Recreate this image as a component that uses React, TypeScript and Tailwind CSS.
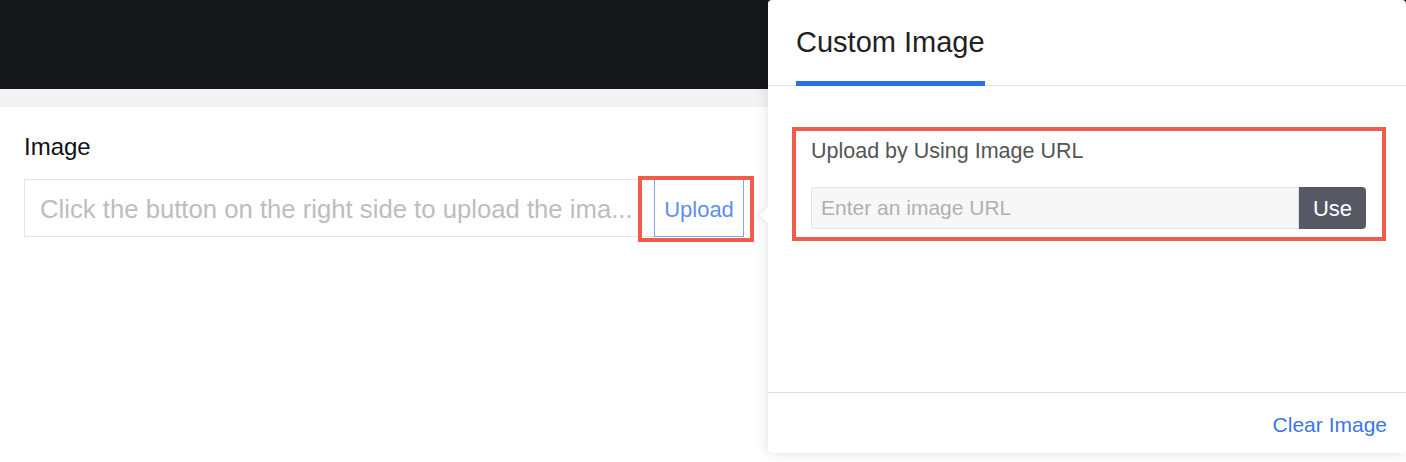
import React from "react";

export default function App() {
  return (
    <div
      className="relative w-[1406px] h-[462px] overflow-hidden bg-white"
      style={{ fontFamily: '"Liberation Sans", Arial, sans-serif' }}
    >
      {/* Left page */}
      <div className="h-[89px] bg-[#16171b]" />
      <div className="h-[18px] bg-[#f3f3f4]" />
      <div className="pl-[24px] pt-[26px]">
        <div className="text-[24px] leading-[28px] text-[#111]">Image</div>
        <div className="mt-[18px] flex w-[720px] h-[58px]">
          <div className="flex-1 flex items-center pt-[2px] border border-[#e4e4e4] border-r-0 pl-[15px] text-[25.7px] text-[#bdbdbd] whitespace-nowrap overflow-hidden">
            Click the button on the right side to upload the ima...
          </div>
          <div className="w-[90px] flex items-center justify-center pt-[2px] border border-[#86a4e2] text-[22px] text-[#5f8fe6]">
            Upload
          </div>
        </div>
      </div>
      {/* annotation box 1 */}
      <div className="absolute left-[638px] top-[176px] w-[116px] h-[66px] border-[4px] border-[#f25c4c]" />

      {/* Popover panel */}
      <div className="absolute left-[768px] top-0 w-[638px] h-[453px] bg-white rounded-[4px] shadow-[0_0_14px_rgba(0,0,0,0.13)] flex flex-col">
        <div className="absolute -left-[6px] top-[209px] w-[12px] h-[12px] bg-white rotate-45 shadow-[-2px_2px_4px_rgba(0,0,0,0.06)]" />
        <div className="relative h-[86px] border-b border-[#e2e2e2] px-[28px] flex">
          <div className="flex flex-col">
            <div className="pt-[25px] text-[29px] leading-[34px] text-[#222] whitespace-nowrap">Custom Image</div>
            <div className="mt-auto h-[5px] w-[189px] bg-[#2f6eea] -mb-px" />
          </div>
        </div>
        <div className="relative flex-1 pt-[41px] px-[24px]">
          <div className="border-[4px] border-[#f25c4c] w-[594px] pl-[15px] pr-[16px] pt-[7px] pb-[8px]">
            <div className="text-[21.5px] leading-[26px] text-[#555]">Upload by Using Image URL</div>
            <div className="mt-[23px] flex h-[42px]">
              <div className="flex-1 flex items-center bg-[#f7f7f7] border border-[#e3e3e3] rounded-l-[3px] pl-[9px] text-[21px] text-[#b0b0b0]">
                Enter an image URL
              </div>
              <div className="w-[67px] flex items-center justify-center bg-[#565963] rounded-r-[4px] text-[22px] text-white">
                Use
              </div>
            </div>
          </div>
        </div>
        <div className="h-[61px] border-t border-[#e2e2e2] flex justify-end pr-[19px] pt-[19px]">
          <div className="text-[21px] leading-[26px] text-[#3b76e6]">Clear Image</div>
        </div>
      </div>
    </div>
  );
}
